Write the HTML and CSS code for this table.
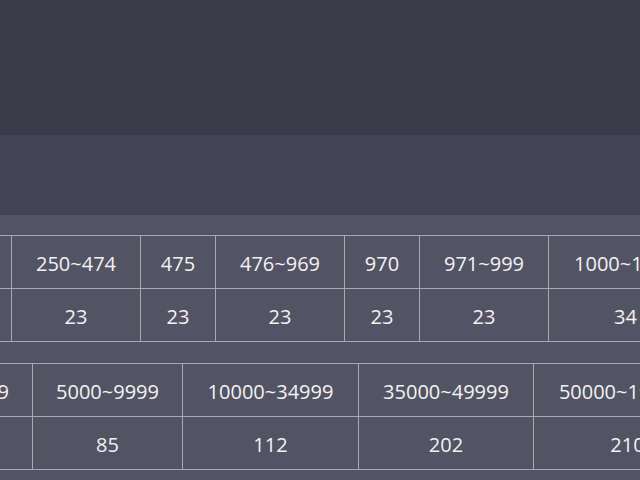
FILE: index.html
```html
<!DOCTYPE html>
<html lang="en">
<head>
<meta charset="utf-8">
<title>Fees</title>
<link rel="stylesheet" href="styles.css">
</head>
<body>
<header class="top-bar"></header>
<nav class="sub-bar"></nav>
<main class="content">
  <div class="grid grid-a">
    <div class="cell">0~249</div>
    <div class="cell">250~474</div>
    <div class="cell">475</div>
    <div class="cell">476~969</div>
    <div class="cell">970</div>
    <div class="cell">971~999</div>
    <div class="cell">1000~1999</div>
    <div class="cell">23</div>
    <div class="cell">23</div>
    <div class="cell">23</div>
    <div class="cell">23</div>
    <div class="cell">23</div>
    <div class="cell">23</div>
    <div class="cell">34</div>
  </div>
  <div class="grid grid-b">
    <div class="cell">2000~4999</div>
    <div class="cell">5000~9999</div>
    <div class="cell">10000~34999</div>
    <div class="cell">35000~49999</div>
    <div class="cell">50000~199999</div>
    <div class="cell">45</div>
    <div class="cell">85</div>
    <div class="cell">112</div>
    <div class="cell">202</div>
    <div class="cell">210</div>
  </div>
</main>
</body>
</html>
```
FILE: styles.css
```css
html, body {
  margin: 0;
  padding: 0;
  height: 100%;
  overflow: hidden;
}
body {
  background: #525363;
  font-family: "Open Sans", "Noto Sans", sans-serif;
  color: #f2f2f4;
  display: flex;
  flex-direction: column;
}
.top-bar {
  height: 135px;
  background: #3b3c49;
  flex: none;
}
.sub-bar {
  height: 80px;
  background: #424454;
  flex: none;
}
.content {
  flex: 1;
  overflow: hidden;
  padding-top: 20px;
  display: flex;
  flex-direction: column;
  gap: 21px;
  align-items: flex-start;
}
.grid {
  display: grid;
  grid-auto-rows: 53px;
  border-top: 1px solid #a9a9b4;
  border-left: 1px solid #a9a9b4;
  flex: none;
}
.grid-a {
  grid-template-columns: 106px 129px 75px 129px 75px 129px 154px;
  margin-left: -95px;
}
.grid-b {
  grid-template-columns: 150px 150px 176px 175px 188px;
  margin-left: -118px;
}
.cell {
  box-sizing: border-box;
  border-right: 1px solid #a9a9b4;
  border-bottom: 1px solid #a9a9b4;
  display: flex;
  align-items: center;
  justify-content: center;
  padding-top: 3px;
  font-size: 20px;
  white-space: nowrap;
}
```
